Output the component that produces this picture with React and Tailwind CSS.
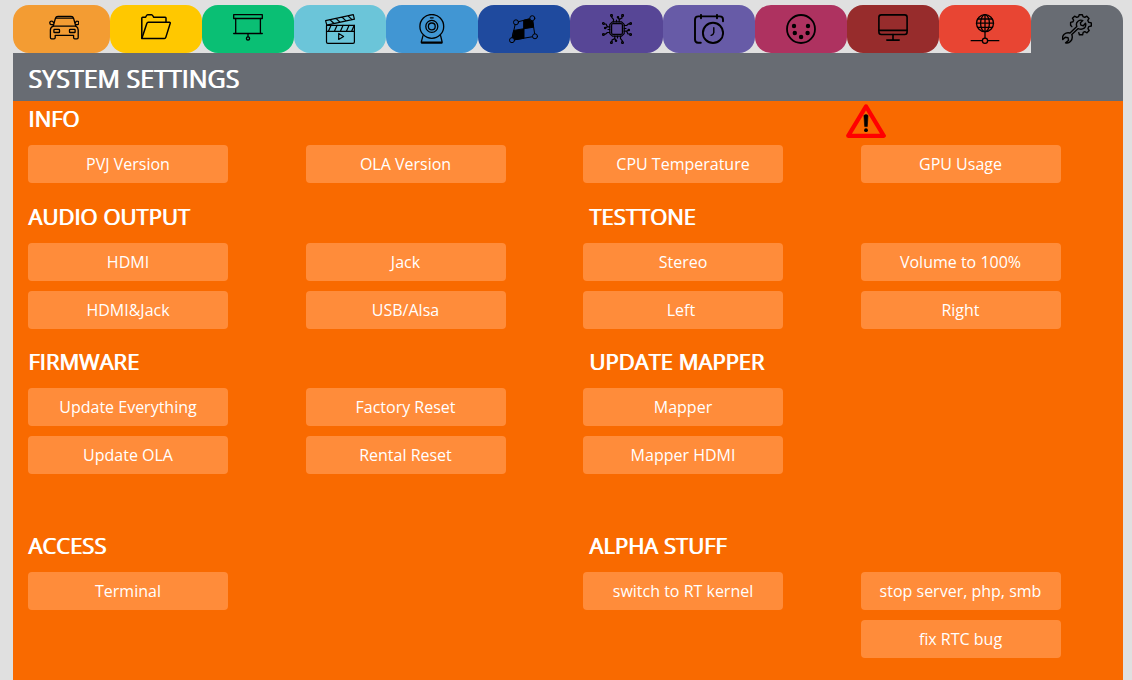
function Icon({ children, sw = 1.2 }) {
  return (
    <svg
      className="size-[30px]"
      viewBox="0 0 30 30"
      fill="none"
      stroke="#000"
      strokeWidth={sw}
      strokeLinecap="round"
      strokeLinejoin="round"
      aria-hidden="true"
    >
      {children}
    </svg>
  );
}

const CarIcon = () => (
  <Icon sw={1.3}>
    <path d="M4.2 12.2 6.4 4.4Q7 2.4 9 2.4H22Q24 2.4 24.6 4.4L26.8 12.2Z" />
    <path d="M7 4.2H24" />
    <path d="M4.3 10.6H2Q.7 10.4.8 8.6Q1 7.2 2.4 7.2Q4 7 4.6 8.8M26.7 10.6H28.6Q30 10.4 29.8 8.6Q29.6 7.2 28.2 7.2Q27 7 26.4 8.8" />
    <path d="M4.2 12.2Q1.4 13.4 1.4 16V23.4Q1.4 24.8 2.6 24.8H5Q6.2 24.8 6.2 23.4V21.3H24.6V23.4Q24.6 24.8 25.8 24.8H28Q29.2 24.8 29.2 23.4V16Q29.2 13.4 26.8 12.2" />
    <rect x="4.9" y="15.3" width="5.6" height="3.2" rx=".6" />
    <rect x="20.5" y="15.3" width="5.6" height="3.2" rx=".6" />
  </Icon>
);

const FolderIcon = () => (
  <Icon sw={1.5}>
    <path d="M.8 24V4.2Q.8 3.3 1.7 3.3H4.6Q5.6.8 6.6.8H10.6Q11.4.8 12.8 3.3H24.2Q25 3.3 25 4.1V8" />
    <path d="M.9 24.2 5.8 9.4Q6.2 8.3 7.2 8.3H28.4Q29.6 8.3 29.2 9.4L24.8 23.4Q24.4 24.6 23.4 24.6H1.6Q.6 24.6.9 24.2Z" />
  </Icon>
);

const ScreenIcon = () => (
  <Icon sw={1.3}>
    <rect x=".7" y=".7" width="28.6" height="3.8" />
    <path d="M2.7 4.5V19.5M27.4 4.5V19.5M.7 19.5H29.3M15 19.5V22.6" />
    <circle cx="15" cy="24.4" r="1.6" />
  </Icon>
);

const ClapperIcon = () => (
  <Icon>
    <path d="M1.5 11.4H29.4V28Q29.4 29.4 28 29.4H2.9Q1.5 29.4 1.5 28Z" />
    <path d="M1.5 17.3H29.4M3.4 17.3 6 11.4M9.4 17.3 12 11.4M15.4 17.3 18 11.4M21.4 17.3 24 11.4M26.6 17.3 29.2 11.4" />
    <path d="M.6 6.6 28.3.7 29.4 5.2 1.8 11.2ZM5 5.7 9 9.5M11 4.4 15 8.2M17 3.1 21 6.9M23 1.9 27 5.6" />
    <path d="M13.7 19.5V25.5L18.6 22.5Z" />
  </Icon>
);

const WebcamIcon = () => (
  <Icon sw={1.3}>
    <circle cx="14.8" cy="12.4" r="11.9" />
    <circle cx="14.8" cy="12.4" r="6" />
    <circle cx="14.8" cy="12.4" r="3.4" />
    <path d="M13.4 3.8H16.2M6 21.6 4.3 27.8Q4.1 29.1 5.4 29.1H24.2Q25.4 29.1 25.1 27.8L23.6 21.6M4.6 28.2H24.8" />
  </Icon>
);

const MappingIcon = () => (
  <Icon sw={1}>
    <path d="M7 8.3 23.3 4.2 26 22.3 3 26.2Z" />
    <path d="M15 6.2 23.3 4.2 24.6 13.2 15 14.7ZM5 16.4 15 14.7V24.3L3 26.2Z" fill="#000" />
    <circle cx="7" cy="8.3" r="2.5" fill="#1f4a9e" />
    <circle cx="23.3" cy="4.2" r="2.5" fill="#1f4a9e" />
    <circle cx="26" cy="22.3" r="2.5" fill="#1f4a9e" />
    <circle cx="3" cy="26.2" r="2.5" fill="#1f4a9e" />
  </Icon>
);

const ChipIcon = () => (
  <Icon sw={1.2}>
    <path d="M10.4 7.8H19.6L22.2 10.4V19.6L19.6 22.2H10.4L7.8 19.6V10.4Z" />
    <rect x="9.6" y="9.6" width="10.8" height="10.8" rx="1.4" />
    {[0, 90, 180, 270].map((a) => (
      <g key={a} transform={`rotate(${a} 15 15)`}>
        <path d="M11.5 7.8V5.4L9.8 3.4V2.4M14.5 7.8V6M17.2 7.8V5.4L20 4V2.4M17.2 5.4 16.4 4" />
        <circle cx="9.5" cy="1.4" r=".9" />
        <circle cx="20.6" cy="1.4" r=".9" />
        <circle cx="16" cy="3.2" r=".7" />
      </g>
    ))}
  </Icon>
);

const ScheduleIcon = () => (
  <Icon sw={1.9}>
    <path d="M6.8 28.8H4.2Q1 28.4 1 25.4V5.8Q1 2.4 4.4 2.4H25.8Q29 2.4 29 5.6V7.2M7 .9V4.2M23 .9V4.2" />
    <circle cx="19" cy="18.9" r="10.1" />
    <path d="M19.8 13.7V18.6Q19.4 20.6 17.2 21.4" strokeWidth="1.4" />
  </Icon>
);

const DmxIcon = () => (
  <Icon sw={1.8}>
    <circle cx="15" cy="15" r="14" />
    <g fill="#000" stroke="none">
      <circle cx="8" cy="12" r="2.2" />
      <circle cx="22" cy="12" r="2.2" />
      <circle cx="8.8" cy="19" r="2.2" />
      <circle cx="21.6" cy="19" r="2.2" />
      <circle cx="15.1" cy="23" r="2.2" />
    </g>
  </Icon>
);

const MonitorIcon = () => (
  <Icon sw={1.6}>
    <rect x=".9" y=".9" width="28.2" height="19.6" rx="2.4" />
    <path d="M1 16.4H29M15 20.6V26M8.8 26.1H21.2" />
  </Icon>
);

const NetworkIcon = () => (
  <Icon sw={1.3}>
    <circle cx="15" cy="9.2" r="8.5" />
    <ellipse cx="15" cy="9.2" rx="4.4" ry="8.5" />
    <path d="M15 .7V24M6.5 9.2H23.5M7.8 5H22.2M7.8 13.4H22.2M1.2 26.7H12.3M17.7 26.7H28.8" />
    <circle cx="15" cy="26.7" r="2.6" />
  </Icon>
);

const ToolsIcon = () => (
  <Icon sw={1.4}>
    <path d="M9.8 12.6 8.6 11.2V8.4L11 7.8 11.6 6.2 10.4 4.2 12.6 2.2 14.8 3.4 16.6 2.6 17.2.8H20.4L21 2.6 22.8 3.4 24.8 2.2 27 4.4 25.8 6.4 26.6 8.2 29.3 8.9V12L26.8 12.6 26 14.6 27.2 16.6 25 18.8 22.8 17.6 21.2 18.4 20.6 20.8H17.4L16.8 18.6" />
    <path d="M16.2 14.6 9.8 20.6Q11.2 24.4 8.6 27.2Q6.6 29.6 3.6 28.8L6.6 26.4 6 23.6 3.2 23.2.8 25.6Q-.2 22.6 2.2 20.2Q4.8 18 8 19L14.8 12.4Q13.6 9 16 7.2Q18.4 5.4 20.8 6.6L18.4 8.8 18.9 11.1 21.3 11.7 23.5 9.3Q24.4 12.2 22.2 14.2Q19.6 16 16.2 14.6Z" />
  </Icon>
);

const tabs = [
  { label: "Vehicle", Icon: CarIcon, style: "bg-[#f39c33] rounded-2xl pl-[5px]" },
  { label: "Files", Icon: FolderIcon, style: "bg-[#ffc800] rounded-2xl" },
  { label: "Projector", Icon: ScreenIcon, style: "bg-[#0abf74] rounded-2xl" },
  { label: "Video", Icon: ClapperIcon, style: "bg-[#6bc5d9] rounded-2xl" },
  { label: "Camera", Icon: WebcamIcon, style: "bg-[#4196d3] rounded-2xl" },
  { label: "Mapping", Icon: MappingIcon, style: "bg-[#1f4a9e] rounded-2xl" },
  { label: "Hardware", Icon: ChipIcon, style: "bg-[#574696] rounded-2xl" },
  { label: "Schedule", Icon: ScheduleIcon, style: "bg-[#675ba7] rounded-2xl" },
  { label: "DMX", Icon: DmxIcon, style: "bg-[#ae3260] rounded-2xl" },
  { label: "Display", Icon: MonitorIcon, style: "bg-[#972c2c] rounded-2xl" },
  { label: "Network", Icon: NetworkIcon, style: "bg-[#e84533] rounded-2xl" },
  { label: "System", Icon: ToolsIcon, style: "bg-[#686c73] rounded-t-2xl", active: true },
];

function WarningIcon() {
  return (
    <svg className="mt-px h-[34px] w-10" viewBox="0 0 40 34" role="img" aria-label="Warning">
      <path d="M20 2.4 37.8 31.8H2.2Z" fill="none" stroke="#f00" strokeWidth="4.2" strokeLinejoin="round" />
      <path d="M17.9 11.4Q20 9.8 22 11.4L21.3 22.6H18.7Z" fill="#000" stroke="#000" strokeWidth=".6" />
      <circle cx="20" cy="26.2" r="1.9" />
    </svg>
  );
}

const sections = [
  {
    gap: "pt-0.5",
    left: { title: "INFO", actions: ["PVJ Version", "OLA Version"] },
    right: { warning: true, actions: ["CPU Temperature", "GPU Usage"] },
  },
  {
    gap: "pt-[18px]",
    left: { title: "AUDIO OUTPUT", actions: ["HDMI", "Jack", "HDMI&Jack", "USB/Alsa"] },
    right: { title: "TESTTONE", actions: ["Stereo", "Volume to 100%", "Left\u00a0", "Right"] },
  },
  {
    gap: "pt-[17px]",
    left: { title: "FIRMWARE", actions: ["Update Everything", "Factory Reset", "Update OLA", "Rental Reset"] },
    right: { title: "UPDATE MAPPER", actions: ["Mapper", null, "Mapper HDMI"] },
  },
  {
    gap: "pt-14",
    left: { title: "ACCESS", actions: ["Terminal"] },
    right: { title: "ALPHA STUFF", actions: ["switch to RT kernel", "stop server, php, smb", null, "fix RTC bug"] },
  },
];

function Group({ title, warning, actions, indent }) {
  return (
    <div>
      <div className="grid h-[42px] grid-cols-2 items-start">
        {title && (
          <h2
            className={`col-span-2 text-[22px] leading-[31px] [text-shadow:1px_0_0_#fff] ${indent ? "pl-[21px]" : "pl-[15px]"}`}
          >
            {title}
          </h2>
        )}
        {warning && (
          <div className="col-start-2">
            <WarningIcon />
          </div>
        )}
      </div>
      <div className="grid grid-cols-2 gap-y-2.5">
        {actions.map((name, i) => (
          <div key={i} className="px-[15px]">
            {name && (
              <button
                type="button"
                className="h-[38px] w-full max-w-[200px] cursor-pointer rounded bg-[#ff8c3a] text-base hover:bg-[#ff9a52]"
              >
                {name}
              </button>
            )}
          </div>
        ))}
      </div>
    </div>
  );
}

export default function App() {
  return (
    <div className="flex min-h-screen flex-col bg-[#e0e0e0] pt-[5px] pr-[9px] pl-[13px] font-['Open_Sans','Noto_Sans',sans-serif] text-white">
      <nav className="flex h-12">
        {tabs.map(({ label, Icon: TabIcon, style, active }) => (
          <a
            key={label}
            href={`#${label.toLowerCase()}`}
            aria-label={label}
            aria-current={active ? "page" : undefined}
            className={`flex flex-1 items-center justify-center ${style}`}
          >
            <TabIcon />
          </a>
        ))}
      </nav>
      <header className="flex h-12 items-center bg-[#686c73] px-[15px]">
        <h1 className="pt-0.5 text-[25px] leading-9 [text-shadow:1px_0_0_#fff]">SYSTEM SETTINGS</h1>
      </header>
      <main className="grow bg-[#f96a00] pb-5">
        {sections.map((s) => (
          <section key={s.left.title} className={`grid grid-cols-2 ${s.gap}`}>
            <Group {...s.left} />
            <Group {...s.right} indent />
          </section>
        ))}
      </main>
    </div>
  );
}
